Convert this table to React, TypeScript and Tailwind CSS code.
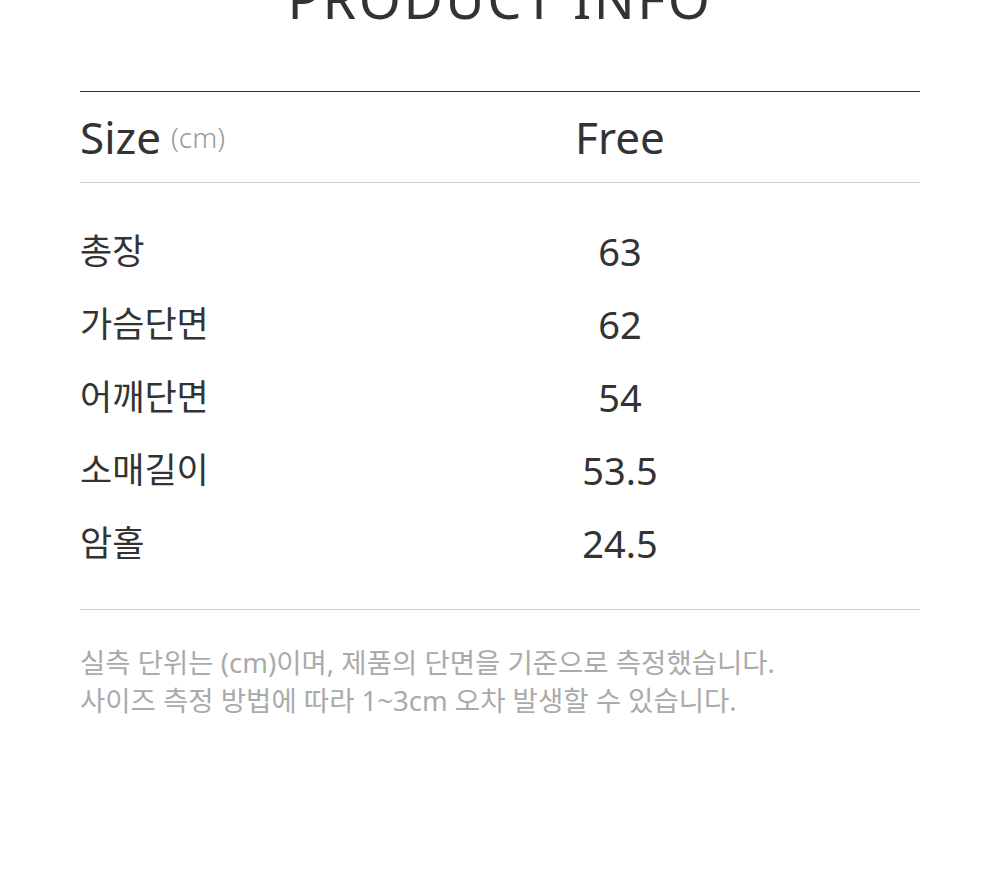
const rows = [
  { label: "총장", value: "63" },
  { label: "가슴단면", value: "62" },
  { label: "어깨단면", value: "54" },
  { label: "소매길이", value: "53.5" },
  { label: "암홀", value: "24.5" },
];

export default function App() {
  return (
    <div
      className="min-h-screen bg-white text-[#333] overflow-hidden"
      style={{ fontFamily: '"Noto Sans", "Noto Sans CJK KR", sans-serif' }}
    >
      <div className="w-[840px] mx-auto">
        {/* Title */}
        <h2 className="text-[54px] leading-none text-center tracking-[2.5px] mt-[-29px] h-[58px]">
          PRODUCT INFO
        </h2>

        {/* Size header */}
        <div className="mt-[62px] border-t border-[#333] border-b border-b-[#ccc] h-[92px] flex items-center">
          <div className="w-[240px] flex items-center gap-[10px]">
            <span className="text-[44px] leading-none">Size</span>
            <span className="text-[28px] leading-none text-[#999] font-light">(cm)</span>
          </div>
          <div className="flex-1 text-center text-[44px]">Free</div>
        </div>

        {/* Measurements */}
        <div className="pt-[32px] pb-[29px] border-b border-[#ccc]">
          {rows.map((r) => (
            <div key={r.label} className="h-[73px] flex items-center">
              <div className="w-[240px] text-[35px]">{r.label}</div>
              <div className="flex-1 text-center text-[38px]">{r.value}</div>
            </div>
          ))}
        </div>

        {/* Note */}
        <p className="mt-[34px] text-[27.5px] leading-[38px] text-[#aaa]">
          실측 단위는 (cm)이며, 제품의 단면을 기준으로 측정했습니다.
          <br />
          사이즈 측정 방법에 따라 1~3cm 오차 발생할 수 있습니다.
        </p>
      </div>
    </div>
  );
}
